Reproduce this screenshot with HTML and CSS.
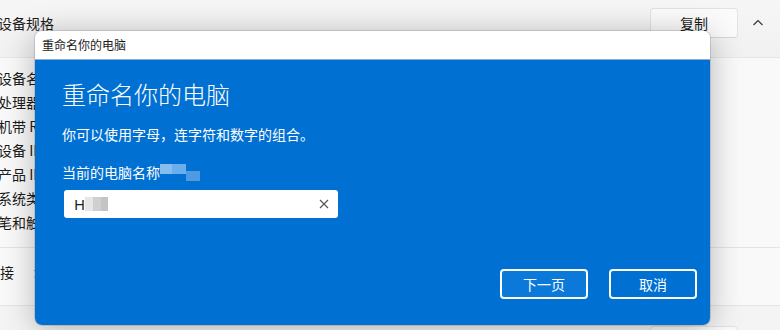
FILE: index.html
```html
<!DOCTYPE html>
<html lang="zh-CN">
<head>
<meta charset="utf-8">
<link rel="stylesheet" href="styles.css">
</head>
<body>
<div class="page">
  <div class="header">
    <div class="header-title">设备规格</div>
    <div class="header-actions">
      <div class="copy-btn">复制</div>
      <svg class="chev" width="14" height="14" viewBox="0 0 14 14"><polyline points="2.5,9 7,4.5 11.5,9" fill="none" stroke="#333" stroke-width="1.1"/></svg>
    </div>
  </div>
  <div class="rows">
    <div class="row">设备名称</div>
    <div class="row">处理器</div>
    <div class="row">机带 RAM</div>
    <div class="row">设备 ID</div>
    <div class="row">产品 ID</div>
    <div class="row">系统类型</div>
    <div class="row">笔和触控</div>
  </div>
  <div class="links">
    <span class="links-label">链接</span><span>域或工作组</span>
  </div>
  <div class="after">
    <div class="after-btn"></div>
  </div>
</div>

<div class="dialog">
  <div class="titlebar">重命名你的电脑</div>
  <div class="body">
    <div class="content">
      <div class="heading">重命名你的电脑</div>
      <div class="sub">你可以使用字母，连字符和数字的组合。</div>
      <div class="label">当前的电脑名称<span class="mosaic m1"></span><span class="mosaic m2"></span><span class="mosaic m3"></span></div>
      <div class="input">
        <span class="val">H</span><span class="pix p1"></span><span class="pix p2"></span><span class="pix p3"></span>
        <span class="spacer"></span>
        <svg class="clear" width="10" height="10" viewBox="0 0 10 10"><path d="M1 1L9 9M9 1L1 9" stroke="#555" stroke-width="1.1" fill="none"/></svg>
      </div>
    </div>
    <div class="footer">
      <div class="btn primary">下一页</div>
      <div class="btn">取消</div>
    </div>
  </div>
</div>
</body>
</html>
```

FILE: styles.css
```css
* { box-sizing: border-box; }
html, body { margin: 0; padding: 0; }
body {
  width: 780px;
  height: 330px;
  overflow: hidden;
  background: #f4f4f4;
  font-family: "Noto Sans CJK SC", "Noto Sans", sans-serif;
  color: #1b1b1b;
  position: relative;
}
.page {
  margin-left: -2px;
  width: 782px;
  height: 330px;
  overflow: hidden;
}
.header {
  height: 58px;
  display: flex;
  align-items: flex-start;
  justify-content: space-between;
  border-bottom: 1px solid #e6e6e6;
  background: linear-gradient(#f6f6f6, #f1f1f1);
}
.header-title {
  font-size: 14px;
  line-height: 20px;
  padding-top: 13px;
}
.header-actions {
  display: flex;
  align-items: center;
  gap: 13px;
  padding-right: 15px;
  padding-top: 8px;
}
.copy-btn {
  width: 88px;
  height: 30px;
  border: 1px solid #e2e2e2;
  border-bottom-color: #d6d6d6;
  border-radius: 4px;
  background: #fbfbfb;
  font-size: 14px;
  line-height: 28px;
  text-align: center;
  color: #1b1b1b;
}
.chev { display: block; }
.rows {
  background: #f9f9f9;
  padding: 8px 0 13px;
  border-bottom: 1px solid #e4e4e4;
}
.row {
  font-size: 14px;
  line-height: 24px;
  height: 24px;
}
.links {
  height: 58px;
  display: flex;
  align-items: center;
  gap: 20px;
  font-size: 14px;
  background: #f9f9f9;
  border-bottom: 1px solid #e4e4e4;
  padding-bottom: 10px;
}
.links-label { margin-left: -12px; }
.after {
  height: 24px;
  padding-left: 652px;
  padding-top: 20px;
  overflow: hidden;
}
.after-btn {
  width: 88px;
  height: 30px;
  border: 1px solid #e2e2e2;
  border-radius: 4px;
  background: #fbfbfb;
}

.dialog {
  position: absolute;
  left: 35px;
  top: 31px;
  width: 675px;
  height: 294px;
  border-radius: 7px;
  overflow: hidden;
  display: flex;
  flex-direction: column;
  box-shadow: 0 0 0 1px rgba(0,0,0,0.12), 0 4px 32px rgba(0,0,0,0.28);
}
.titlebar {
  height: 29px;
  background: #ffffff;
  font-size: 12px;
  line-height: 28px;
  padding-left: 7px;
  color: #1b1b1b;
  border-bottom: 1px solid #7fb2e2;
}
.body {
  flex: 1;
  background: #0071d3;
  display: flex;
  flex-direction: column;
  justify-content: space-between;
  padding: 18px 13px 26px 27px;
  color: #ffffff;
}
.heading {
  font-size: 24px;
  line-height: 32px;
  font-weight: 300;
}
.sub {
  margin-top: 14px;
  font-size: 14px;
  line-height: 20px;
}
.label {
  margin-top: 18px;
  font-size: 14px;
  line-height: 20px;
  display: flex;
  align-items: center;
}
.mosaic {
  display: inline-block;
  height: 10px;
}
.m1 { width: 12px; background: #86bdef; margin-top: -6px; }
.m2 { width: 14px; background: #6aaeeb; margin-top: -6px; }
.m3 { width: 14px; background: #4e9be3; margin-top: 8px; }
.input {
  margin-top: 8px;
  margin-left: 2px;
  width: 274px;
  height: 28px;
  background: #ffffff;
  border-radius: 3px;
  display: flex;
  align-items: center;
  padding: 0 9px 0 10px;
  color: #1b1b1b;
  font-size: 15px;
  font-family: "Noto Sans", "Noto Sans CJK SC", sans-serif;
}
.val { line-height: 20px; }
.pix {
  display: inline-block;
  height: 14px;
  width: 8px;
}
.p1 { background: #e6e6e6; }
.p2 { background: #cfcfcf; }
.p3 { background: #c4c4c4; width: 7px; }
.spacer { flex: 1; }
.clear { display: block; }
.footer {
  display: flex;
  justify-content: flex-end;
  gap: 21px;
}
.btn {
  width: 88px;
  height: 30px;
  border: 2px solid #ffffff;
  border-radius: 4px;
  font-size: 14px;
  line-height: 26px;
  text-align: center;
  color: #ffffff;
}
.btn.primary { background: #0a79d9; }
```
